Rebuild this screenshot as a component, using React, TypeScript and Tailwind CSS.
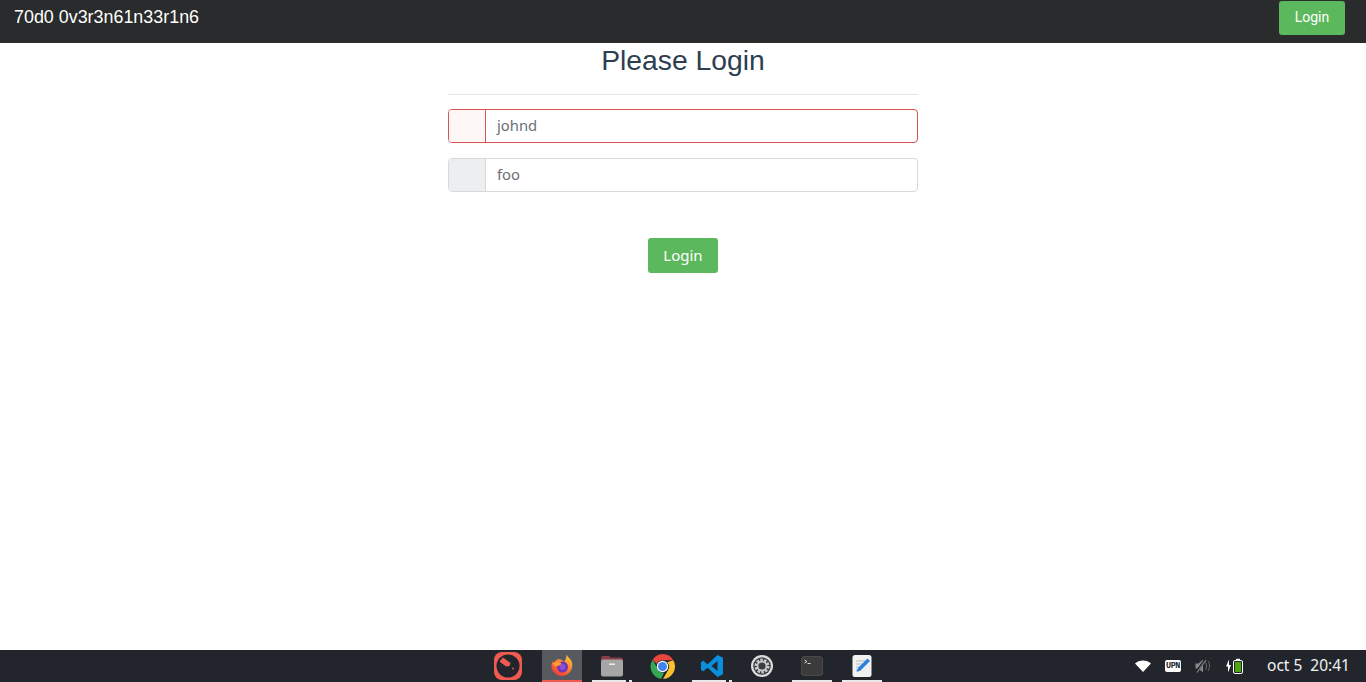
import React from 'react';

function FirefoxIcon() {
  return (
    <svg width="24" height="24" viewBox="0 0 24 24" aria-hidden="true">
      <defs>
        <linearGradient id="ff" x1="0.8" y1="0" x2="0.2" y2="1">
          <stop offset="0" stopColor="#ffc93a" />
          <stop offset="0.5" stopColor="#ff7a2c" />
          <stop offset="1" stopColor="#f0323f" />
        </linearGradient>
      </defs>
      <path d="M16.500 0.500c.6 2 2.400 3 3.600 4.600 1.700 2.100 2.400 4.400 2.200 7-.4 5.200-4.800 9.900-10.300 9.900C6.300 22 1.500 17.500 1.500 12c0-2 .5-3.800 1.500-5.300.1 1 .4 1.700 1 2.200C5 6.500 7 5 9.300 5.300 11.500 5.500 13 7 14 8c1.500-2 2.500-4.500 2.500-7.500z" fill="url(#ff)" />
      <circle cx="12.500" cy="13" r="5.500" fill="#6b35b8" />
      <circle cx="12.500" cy="13" r="3" fill="#8d4fd6" />
      <path d="M2.500 9.500c2-1.500 5-2 7-1.200 1.200.4 2 1.200 2.500 2-1.500 0-2.500.6-3 1.500L5.500 12.500z" fill="#ff9a2e" />
    </svg>
  );
}

function ChromeIcon() {
  return (
    <svg width="25" height="25" viewBox="0 0 24 24" aria-hidden="true">
      <path d="M12 0a12 12 0 0 1 10.400 6H12a6 6 0 0 0-5.500 3.500L2.600 5.500A12 12 0 0 1 12 0z" fill="#e8453c" />
      <path d="M22.400 6A12 12 0 0 1 12.500 24l4.800-8.500A6 6 0 0 0 16.500 8z" fill="#fbc02d" />
      <path d="M2.600 5.500 7 13.500a6 6 0 0 0 6.500 4.400L10.500 24A12 12 0 0 1 2.600 5.500z" fill="#34a853" />
      <circle cx="12" cy="12" r="5.500" fill="#fff" />
      <circle cx="12" cy="12" r="4.300" fill="#3f84f0" />
    </svg>
  );
}

function VscodeIcon() {
  return (
    <svg width="24" height="24" viewBox="0 0 24 24" aria-hidden="true">
      <path d="M17.500 1 23 3.700v16.600L17.500 23 7.600 13.800l-4.300 3.400L1 16V8l2.300-1.200 4.300 3.400zM17.500 7l-6 5 6 5z" fill="#0a8fdc" />
    </svg>
  );
}

function GearIcon() {
  return (
    <svg width="24" height="24" viewBox="0 0 24 24" aria-hidden="true">
      <circle cx="12" cy="12" r="11" fill="#dcdcdc" />
      <circle cx="12" cy="12" r="8.800" fill="#3a3d40" />
      <circle cx="12" cy="12" r="6" fill="none" stroke="#c9c9c9" strokeWidth="3" strokeDasharray="2.400 1.300" />
      <circle cx="12" cy="12" r="4.500" fill="none" stroke="#c9c9c9" strokeWidth="1.800" />
    </svg>
  );
}

function LogoIcon() {
  return (
    <svg width="30" height="30" viewBox="0 0 30 30" aria-hidden="true">
      <rect x="1" y="1" width="28" height="28" rx="8" fill="#ef5b50" />
      <circle cx="15" cy="15" r="11.500" fill="#22262c" />
      <path d="M6.500 10.500 10 6.500l7.500 5.500-1 3-3.500.5z" fill="#ef5b50" />
      <circle cx="20" cy="17.500" r="0.900" fill="#ef5b50" />
    </svg>
  );
}

function FolderIcon() {
  return (
    <svg width="24" height="24" viewBox="0 0 24 24" aria-hidden="true">
      <path d="M1 4a2 2 0 0 1 2-2h6l2 1.500h10a2 2 0 0 1 2 2V10H1z" fill="#8a3b48" />
      <rect x="1" y="5.500" width="22" height="17" rx="2" fill="#a6a6a6" />
      <rect x="9" y="9.500" width="6" height="1.400" fill="#f2f2f2" />
    </svg>
  );
}

function TerminalIcon() {
  return (
    <svg width="22" height="20" viewBox="0 0 22 20" aria-hidden="true">
      <rect x="0.500" y="0.500" width="21" height="19" rx="2.500" fill="#3b3b3b" stroke="#4a4a4a" />
      <path d="M3.500 4 6 5.500 3.500 7" fill="none" stroke="#e8e8e8" strokeWidth="0.900" />
      <path d="M6.500 7.500h3" stroke="#e8e8e8" strokeWidth="0.900" />
    </svg>
  );
}

function EditorIcon() {
  return (
    <svg width="20" height="24" viewBox="0 0 20 24" aria-hidden="true">
      <rect x="0.500" y="1" width="19" height="22" rx="2.500" fill="#f1f1f1" />
      <path d="M4 7h11M4 10h9M4 13h7M4 16h5" stroke="#b9b9b9" strokeWidth="1" />
      <path d="M15.500 4.500 18 7 8.500 16.500 4.500 18l1.500-4z" fill="#2a7de1" />
    </svg>
  );
}

function WifiIcon() {
  return (
    <svg width="16" height="12" viewBox="0 0 16 12" aria-hidden="true">
      <path d="M0 3.500C2 1.500 5 .5 8 .5s6 1 8 3l-8 8.500z" fill="#fff" />
    </svg>
  );
}

function MutedIcon() {
  return (
    <svg width="16" height="14" viewBox="0 0 16 14" aria-hidden="true">
      <path d="M0.500 4.500h3L8 0.500v13L3.500 9.500h-3z" fill="#85878a" />
      <path d="M10.500 3.500c1.400 2 1.400 5 0 7M13 2c2 3 2 7 0 10" fill="none" stroke="#6a6c6f" strokeWidth="1" />
      <path d="M1 13.500 10.500 0.500" stroke="#22262c" strokeWidth="2.600" />
      <path d="M2 13.500 11 1" stroke="#85878a" strokeWidth="1.200" />
    </svg>
  );
}

function BatteryIcon() {
  return (
    <svg width="18" height="16" viewBox="0 0 18 16" aria-hidden="true">
      <path d="M4 1.500 1 8.500h2v6l3-7.500H4z" fill="#fff" />
      <rect x="8.500" y="2.500" width="9" height="13" rx="1.500" fill="none" stroke="#fff" />
      <rect x="11" y="0.800" width="4" height="1.700" fill="#fff" />
      <rect x="10" y="4" width="6" height="10" fill="#4ea60f" />
    </svg>
  );
}

const dockItems = [
  { icon: <FirefoxIcon />, bar: 'active' },
  { icon: <FolderIcon />, bar: 'double' },
  { icon: <ChromeIcon />, bar: 'none' },
  { icon: <VscodeIcon />, bar: 'double' },
  { icon: <GearIcon />, bar: 'none' },
  { icon: <TerminalIcon />, bar: 'single' },
  { icon: <EditorIcon />, bar: 'single' },
];

function DockItem({ icon, bar }: { icon: React.ReactNode; bar: string }) {
  return (
    <div className={`relative flex h-full w-10 items-center justify-center ${bar === 'active' ? 'bg-[#565a5e]' : ''}`}>
      {icon}
      {bar === 'active' && <span className="absolute inset-x-0 bottom-0 h-[2px] bg-[#ef5b50]" />}
      {bar === 'double' && <span className="absolute bottom-0 left-0 h-[2px] w-[34px] bg-[#e8e8e8]" />}
      {bar === 'double' && <span className="absolute bottom-0 left-[37px] h-[2px] w-[3px] bg-[#e8e8e8]" />}
      {bar === 'single' && <span className="absolute inset-x-0 bottom-0 h-[2px] bg-[#e8e8e8]" />}
    </div>
  );
}

function InputRow({ value, error }: { value: string; error?: boolean }) {
  return (
    <div className={`flex h-[34px] w-full overflow-hidden rounded-[4px] border bg-white ${error ? 'border-[#d9534f]' : 'border-[#d9d9d9]'}`}>
      <div className={`w-[37px] border-r ${error ? 'border-[#d9534f] bg-[#fdf7f7]' : 'border-[#d9d9d9] bg-[#eceeef]'}`} />
      <div className="flex items-center pb-[2px] pl-[11px] font-['Noto_Sans',sans-serif] text-[14.800px] text-[#6b7075]">{value}</div>
    </div>
  );
}

export default function App() {
  return (
    <div className="flex h-[682px] w-[1366px] flex-col overflow-hidden bg-white font-['Liberation_Sans',sans-serif]">
      <header className="flex h-[43px] shrink-0 items-start justify-between bg-[#292b2c] pl-[14px] pr-[21px] pt-[1px]">
        <span className="mt-[5px] text-[17.900px] leading-[22px] text-white">70d0 0v3r3n61n33r1n6</span>
        <button className="flex h-[34px] w-[66px] items-center justify-center rounded-[3px] bg-[#5cb85c] pb-[1px] font-['Roboto',sans-serif] text-[14px] text-white">
          Login
        </button>
      </header>

      <main className="flex flex-1 flex-col items-center">
        <div className="flex w-[470px] flex-col items-center">
          <h1 className="text-[28.300px] leading-[34px] text-[#2c3e50]">Please Login</h1>
          <hr className="mt-[17px] w-full border-[#e5e5e5]" />
          <div className="mt-[14px] flex w-full flex-col gap-[15px]">
            <InputRow value="johnd" error />
            <InputRow value="foo" />
          </div>
          <button className="mt-[46px] flex h-[35px] w-[70px] items-center justify-center rounded-[3px] bg-[#5cb85c] font-['Noto_Sans',sans-serif] text-[15px] text-white">
            Login
          </button>
        </div>
      </main>

      <footer className="flex h-[32px] shrink-0 items-center bg-[#22262c] pl-[488px] pr-[16px]">
        <div className="flex h-full w-10 items-center justify-center">
          <LogoIcon />
        </div>
        <div className="ml-[14px] flex h-full gap-[10px]">
          {dockItems.map((item, i) => (
            <DockItem key={i} icon={item.icon} bar={item.bar} />
          ))}
        </div>
        <div className="ml-auto flex items-center">
          <WifiIcon />
          <span className="ml-[14px] flex h-[12px] w-4 items-center justify-center rounded-[2px] bg-white font-['Liberation_Mono',monospace] text-[8.500px] font-bold tracking-[-0.500px] text-[#22262c]">
            UPN
          </span>
          <span className="ml-[14px] flex"><MutedIcon /></span>
          <span className="ml-[14px] flex"><BatteryIcon /></span>
          <span className="ml-[24px] whitespace-pre font-['Noto_Sans',sans-serif] text-[15.500px] text-[#f2f2f2]">oct 5  20:41</span>
        </div>
      </footer>
    </div>
  );
}
